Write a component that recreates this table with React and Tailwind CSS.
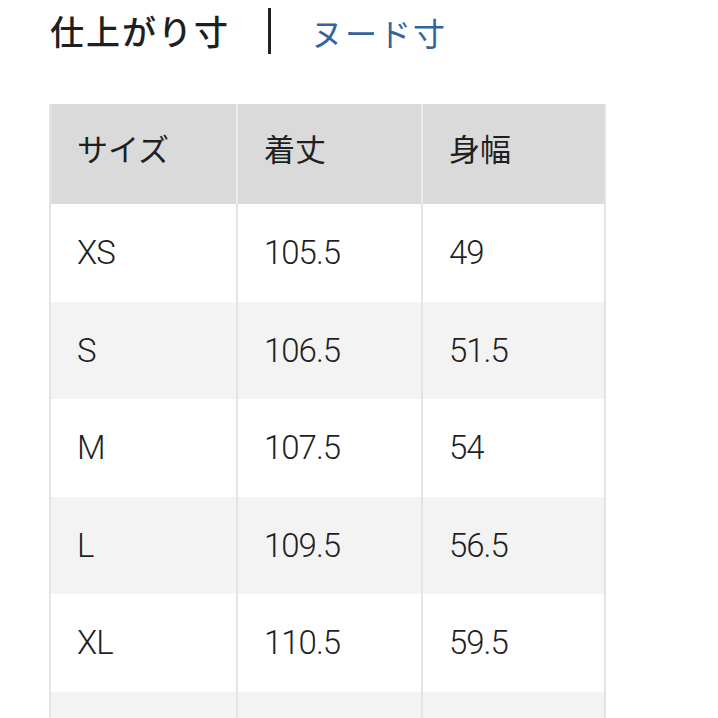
const HEADERS = ['サイズ', '着丈', '身幅']

const ROWS = [
  ['XS', '105.5', '49'],
  ['S', '106.5', '51.5'],
  ['M', '107.5', '54'],
  ['L', '109.5', '56.5'],
  ['XL', '110.5', '59.5'],
  ['', '', ''],
]

const cjk = "font-['Noto_Sans_CJK_JP','Noto_Sans',sans-serif]"

export default function App() {
  return (
    <div className="w-[718px] h-[718px] overflow-hidden bg-white text-[#1f1f1f]">
      {/* 切り替えタブ */}
      <div className={`flex items-center h-[62px] pl-[50px] ${cjk}`}>
        <span className="text-[34px] font-medium tracking-[2px] leading-none">仕上がり寸</span>
        <span className="w-[3px] h-[46px] bg-[#222] ml-[38px] mr-[40px]" />
        <span className="text-[32px] tracking-[2px] leading-none text-[#33649d] pt-[2px]">ヌード寸</span>
      </div>

      {/* サイズ表 */}
      <div className="mt-[42px] ml-[49px] w-[557px] border-x-2 border-[#e4e4e4]">
        <div className={`grid grid-cols-[185px_185px_183px] h-[100px] bg-[#dadada] ${cjk}`}>
          {HEADERS.map((h, i) => (
            <div
              key={h}
              className={`flex items-center pl-[26px] pb-[12px] text-[31px] ${i > 0 ? 'border-l-2 border-[#ececec]' : ''}`}
            >
              {h}
            </div>
          ))}
        </div>
        {ROWS.map((row, r) => (
          <div
            key={r}
            className={`grid grid-cols-[185px_185px_183px] h-[97.5px] font-['Roboto','Liberation_Sans',sans-serif] font-light ${r % 2 === 1 ? 'bg-[#f3f3f3]' : 'bg-white'}`}
          >
            {row.map((v, i) => (
              <div
                key={i}
                className={`flex items-center pl-[26px] text-[33px] tracking-[-1px] ${i > 0 ? 'border-l-2 border-[#e4e4e4]' : ''}`}
              >
                {v}
              </div>
            ))}
          </div>
        ))}
      </div>
    </div>
  )
}
